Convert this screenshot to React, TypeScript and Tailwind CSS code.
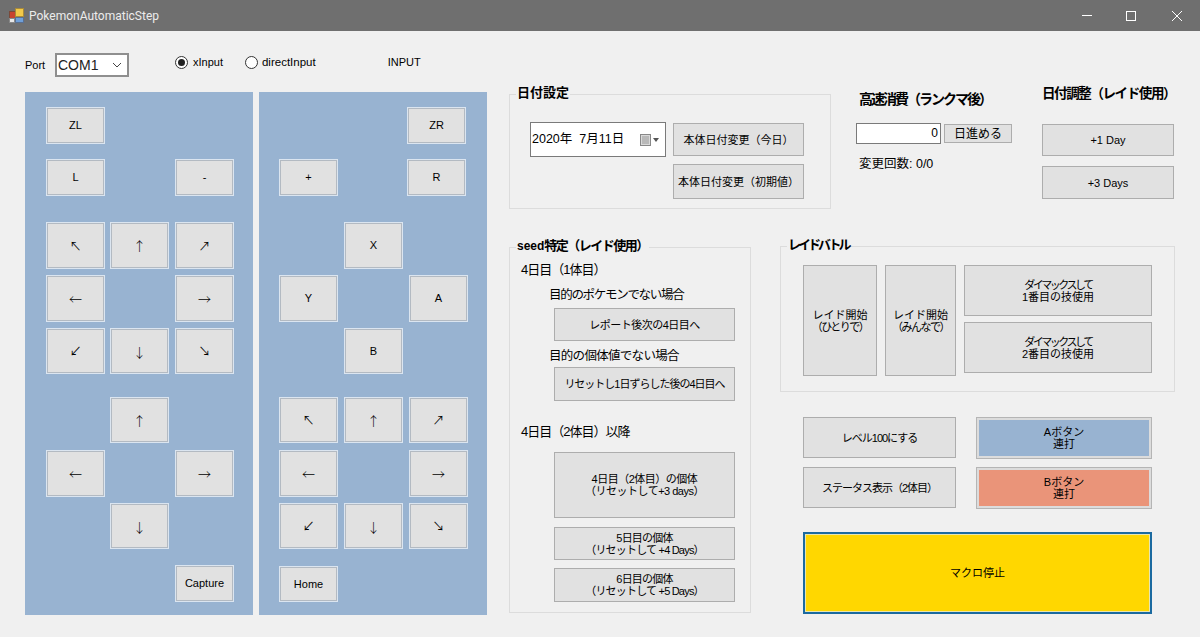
import type { ReactNode } from "react";

const jp = "font-['Liberation_Sans','Noto_Sans_CJK_JP',sans-serif]";

// button sitting on the blue panels, has the pale outer edge
function PadBtn({ className = "", children }: { className?: string; children?: ReactNode }) {
  return (
    <button className={`flex w-[59px] items-center justify-center border border-[#dbe5f0] bg-[#e1e1e1] text-[11px] text-black shadow-[inset_0_0_0_1px_#b3bac2] ${className}`}>
      {children}
    </button>
  );
}

function Arrow({ children }: { children: ReactNode }) {
  return <span className="font-['Noto_Sans_CJK_JP',sans-serif] text-[13px] leading-none font-light">{children}</span>;
}

function Diag({ children }: { children: ReactNode }) {
  return <span className="font-['Noto_Sans_CJK_JP',sans-serif] text-[12px] leading-none">{children}</span>;
}

function Btn({ className = "", children }: { className?: string; children?: ReactNode }) {
  return (
    <button className={`flex items-center justify-center border border-[#adadad] bg-[#e1e1e1] text-[11px] leading-[12px] text-black ${className}`}>
      {children}
    </button>
  );
}

function Group({ title, className = "", children }: { title: ReactNode; className?: string; children?: ReactNode }) {
  return (
    <fieldset className={`min-w-0 border border-[#dcdcdc] ${className}`}>
      <legend className="ml-[6px] px-[1px] pb-[2px] text-[13px] leading-[14px] font-bold text-black">{title}</legend>
      {children}
    </fieldset>
  );
}

function Radio({ checked }: { checked?: boolean }) {
  return (
    <span className="flex h-[13px] w-[13px] items-center justify-center rounded-full border border-[#333] bg-white">
      {checked && <span className="h-[7px] w-[7px] rounded-full bg-[#222]" />}
    </span>
  );
}

function AppIcon() {
  return (
    <svg width="15" height="15" viewBox="0 0 15 15">
      <rect x="0.5" y="3.5" width="6" height="7" fill="#c8442f" stroke="#7a4a3a" />
      <rect x="6.5" y="0.5" width="8" height="8" fill="#f2c94a" stroke="#a88a3a" />
      <rect x="0.5" y="10.5" width="5" height="4" fill="#e8e8e8" stroke="#888" />
      <rect x="6.5" y="9.5" width="8" height="5" fill="#6f9fd8" stroke="#5a6f90" />
    </svg>
  );
}

function LeftPanel() {
  return (
    <div className="flex h-[523px] w-[228px] flex-col bg-[#98b3d1] pt-[15px] pl-[21px]">
      <div className="flex h-[37px]"><PadBtn>ZL</PadBtn></div>
      <div className="mt-[15px] flex h-[37px]"><PadBtn>L</PadBtn><PadBtn className="ml-[70px]">-</PadBtn></div>
      <div className="mt-[26px] flex h-[47px] gap-x-[5px]"><PadBtn><Diag>↖</Diag></PadBtn><PadBtn><Arrow>↑</Arrow></PadBtn><PadBtn className="ml-[1px]"><Diag>↗</Diag></PadBtn></div>
      <div className="mt-[6px] flex h-[47px]"><PadBtn><Arrow>←</Arrow></PadBtn><PadBtn className="ml-[70px]"><Arrow>→</Arrow></PadBtn></div>
      <div className="mt-[6px] flex h-[46px] gap-x-[5px]"><PadBtn><Diag>↙</Diag></PadBtn><PadBtn><Arrow>↓</Arrow></PadBtn><PadBtn className="ml-[1px]"><Diag>↘</Diag></PadBtn></div>
      <div className="mt-[23px] flex h-[46px]"><PadBtn className="ml-[64px]"><Arrow>↑</Arrow></PadBtn></div>
      <div className="mt-[7px] flex h-[47px]"><PadBtn><Arrow>←</Arrow></PadBtn><PadBtn className="ml-[70px]"><Arrow>→</Arrow></PadBtn></div>
      <div className="mt-[6px] flex h-[46px]"><PadBtn className="ml-[64px]"><Arrow>↓</Arrow></PadBtn></div>
      <div className="mt-[16px] flex h-[37px]"><PadBtn className="ml-[129px]">Capture</PadBtn></div>
    </div>
  );
}

function RightPanel() {
  return (
    <div className="flex h-[523px] w-[228px] flex-col bg-[#98b3d1] pt-[15px] pl-[20px]">
      <div className="flex h-[37px]"><PadBtn className="ml-[128px]">ZR</PadBtn></div>
      <div className="mt-[15px] flex h-[37px]"><PadBtn>+</PadBtn><PadBtn className="ml-[69px]">R</PadBtn></div>
      <div className="mt-[26px] flex h-[47px]"><PadBtn className="ml-[65px]">X</PadBtn></div>
      <div className="mt-[6px] flex h-[47px]"><PadBtn>Y</PadBtn><PadBtn className="ml-[71px]">A</PadBtn></div>
      <div className="mt-[6px] flex h-[46px]"><PadBtn className="ml-[65px]">B</PadBtn></div>
      <div className="mt-[23px] flex h-[46px] gap-x-[6px]"><PadBtn><Diag>↖</Diag></PadBtn><PadBtn><Arrow>↑</Arrow></PadBtn><PadBtn><Diag>↗</Diag></PadBtn></div>
      <div className="mt-[7px] flex h-[47px]"><PadBtn><Arrow>←</Arrow></PadBtn><PadBtn className="ml-[71px]"><Arrow>→</Arrow></PadBtn></div>
      <div className="mt-[6px] flex h-[46px] gap-x-[6px]"><PadBtn><Diag>↙</Diag></PadBtn><PadBtn><Arrow>↓</Arrow></PadBtn><PadBtn><Diag>↘</Diag></PadBtn></div>
      <div className="mt-[17px] flex h-[36px]"><PadBtn>Home</PadBtn></div>
    </div>
  );
}

export default function App() {
  return (
    <div className={`flex h-[637px] w-[1200px] flex-col overflow-hidden bg-[#f0f0f0] text-black ${jp}`}>
      {/* title bar */}
      <div className="flex h-[31px] shrink-0 items-center bg-[#6f6f6f] pl-[9px]">
        <AppIcon />
        <span className="ml-[5px] font-['Roboto',sans-serif] text-[12px] text-[#ececec]">PokemonAutomaticStep</span>
        <div className="ml-auto flex items-center pr-[18px]">
          <span className="h-px w-[10px] bg-white" />
          <span className="ml-[34px] h-[10px] w-[10px] border border-white" />
          <svg className="ml-[36px]" width="10" height="10" viewBox="0 0 10 10" stroke="white" strokeWidth="1">
            <path d="M0 0 L10 10 M10 0 L0 10" />
          </svg>
        </div>
      </div>

      <div className="flex pl-[25px]">
        {/* controller side */}
        <div className="w-[462px] pt-[22px]">
          <div className="flex h-[24px] items-center">
            <span className="mt-[1px] w-[30px] text-[11px]">Port</span>
            <div className="flex h-[24px] w-[74px] items-center justify-between border-2 border-[#8f8f8f] bg-white pr-[5px] pl-[1px]">
              <span className="text-[14px] text-[#222]">COM1</span>
              <svg width="10" height="6" viewBox="0 0 10 6" fill="none" stroke="#444" strokeWidth="1">
                <path d="M1 1 L5 5 L9 1" />
              </svg>
            </div>
            <span className="mb-[5px] ml-[46px]"><Radio checked /></span>
            <span className="mb-[5px] ml-[5px] text-[11px]">xInput</span>
            <span className="mb-[5px] ml-[22px]"><Radio /></span>
            <span className="mb-[5px] ml-[4px] text-[11.5px]">directInput</span>
            <span className="mb-[6px] ml-[72px] text-[11px]">INPUT</span>
          </div>
          <div className="mt-[15px] flex gap-x-[6px]">
            <LeftPanel />
            <RightPanel />
          </div>
        </div>

        {/* macro side */}
        <div className="ml-[22px] flex flex-col pt-[53px]">
          <div className="flex h-[125px]">
            <Group title="日付設定" className="mt-[2px] h-[123px] w-[322px]">
              <div className="flex pt-[20px] pl-[20px]">
                <div className="flex h-[35px] w-[136px] items-center border border-[#7a7a7a] bg-white pr-[5px] pl-[1px] text-[12.5px]">
                  <span>2020年&nbsp;&nbsp;7月11日</span>
                  <svg className="ml-auto" width="20" height="12" viewBox="0 0 20 12">
                    <rect x="0.5" y="0.5" width="10" height="11" fill="#d9d9d9" stroke="#888" />
                    <path d="M2 3H9M2 5H9M2 7H9M2 9H9" stroke="#999" />
                    <path d="M13 4 H19 L16 8 Z" fill="#555" />
                  </svg>
                </div>
                <div className="mt-[1px] ml-[7px] flex flex-col">
                  <Btn className="h-[33px] w-[131px]">本体日付変更（今日）</Btn>
                  <Btn className="mt-[8px] h-[35px] w-[131px]">本体日付変更（初期値）</Btn>
                </div>
              </div>
            </Group>
            <div className="ml-[25px] w-[156px]">
              <div className="mt-[5px] ml-[3px] h-[20px] text-[14px] leading-[20px] font-bold tracking-[-2px] whitespace-nowrap">高速消費（ランクマ後）</div>
              <div className="mt-[14px] flex items-center">
                <div className="h-[21px] w-[85px] border border-[#7a7a7a] bg-white pr-[2px] text-right text-[12px] leading-[19px]">0</div>
                <Btn className="ml-[3px] h-[19px] w-[68px]"><span className="text-[12px]">日進める</span></Btn>
              </div>
              <div className="mt-[12px] ml-[3px] text-[12.5px] leading-[16px]">変更回数: 0/0</div>
            </div>
            <div className="ml-[30px] w-[132px]">
              <div className="h-[20px] text-[13.5px] leading-[20px] font-bold tracking-[-1.4px] whitespace-nowrap">日付調整（レイド使用）</div>
              <Btn className="mt-[20px] h-[32px] w-[132px]">+1 Day</Btn>
              <Btn className="mt-[10px] h-[33px] w-[132px]">+3 Days</Btn>
            </div>
          </div>

          <div className="mt-[29px] flex">
            <Group title={<><span className="text-[12px]">seed</span><span className="tracking-[-1.5px]">特定（レイド使用）</span></>} className="mt-[1px] h-[374px] w-[242px]">
              <div className="flex flex-col pt-[7px] pl-[11px]">
                <div className="h-[16px] text-[13px] leading-[16px] tracking-[-1px]">4日目（1体目）</div>
                <div className="mt-[9px] ml-[28px] h-[16px] text-[12.5px] leading-[16px] tracking-[-1.3px]">目的のポケモンでない場合</div>
                <Btn className="mt-[5px] ml-[33px] h-[33px] w-[181px] tracking-[-0.5px]">レポート後次の4日目へ</Btn>
                <div className="mt-[7px] ml-[28px] h-[16px] text-[12.5px] leading-[16px] tracking-[-0.7px]">目的の個体値でない場合</div>
                <Btn className="mt-[3px] ml-[33px] h-[34px] w-[181px] tracking-[-1px]">リセットし1日ずらした後の4日目へ</Btn>
                <div className="mt-[23px] h-[16px] text-[13px] leading-[16px] tracking-[-1px]">4日目（2体目）以降</div>
                <Btn className="mt-[12px] ml-[33px] h-[66px] w-[181px] tracking-[-0.5px]"><span>4日目（2体目）の個体<br />（リセットして+3 days）</span></Btn>
                <Btn className="mt-[9px] ml-[33px] h-[33px] w-[181px] tracking-[-0.8px]"><span>5日目の個体<br />（リセットして +4 Days）</span></Btn>
                <Btn className="mt-[8px] ml-[33px] h-[34px] w-[181px] tracking-[-0.8px]"><span>6日目の個体<br />（リセットして +5 Days）</span></Btn>
              </div>
            </Group>

            <div className="ml-[29px] flex flex-col">
              <Group title={<span className="tracking-[-3px]">レイドバトル</span>} className="h-[154px] w-[395px]">
                <div className="flex pt-[11px] pl-[22px]">
                  <Btn className="h-[111px] w-[74px]"><span>レイド開始<br /><span className="tracking-[-1.5px]">（ひとりで）</span></span></Btn>
                  <Btn className="ml-[8px] h-[111px] w-[71px]"><span>レイド開始<br /><span className="tracking-[-1.5px]">（みんなで）</span></span></Btn>
                  <div className="ml-[8px] flex flex-col">
                    <Btn className="h-[51px] w-[188px]"><span><span className="tracking-[-2.5px]">ダイマックスして</span><br />1番目の技使用</span></Btn>
                    <Btn className="mt-[6px] h-[51px] w-[188px]"><span><span className="tracking-[-2.5px]">ダイマックスして</span><br />2番目の技使用</span></Btn>
                  </div>
                </div>
              </Group>

              <div className="mt-[25px] ml-[23px] flex flex-col">
                <div className="flex">
                  <Btn className="h-[41px] w-[153px] tracking-[-1px]">レベル100にする</Btn>
                  <button className="ml-[20px] h-[42px] w-[176px] border-[3px] border-[#dcdcdc] bg-[#98b3d1] text-[11px] leading-[12px] outline outline-offset-[-1px] outline-[#b5b5b5]">Aボタン<br />連打</button>
                </div>
                <div className="mt-[8px] flex">
                  <Btn className="h-[41px] w-[153px] tracking-[-1px]">ステータス表示（2体目）</Btn>
                  <button className="ml-[20px] h-[42px] w-[176px] border-[3px] border-[#dcdcdc] bg-[#ea9479] text-[11px] leading-[12px] outline outline-offset-[-1px] outline-[#b5b5b5]">Bボタン<br />連打</button>
                </div>
                <button className="mt-[23px] h-[82px] w-[349px] border-2 border-[#1b6aa0] bg-[#ffd700] text-[11px] shadow-[inset_0_0_0_1px_#e8e6b0]">マクロ停止</button>
              </div>
            </div>
          </div>
        </div>
      </div>
    </div>
  );
}
